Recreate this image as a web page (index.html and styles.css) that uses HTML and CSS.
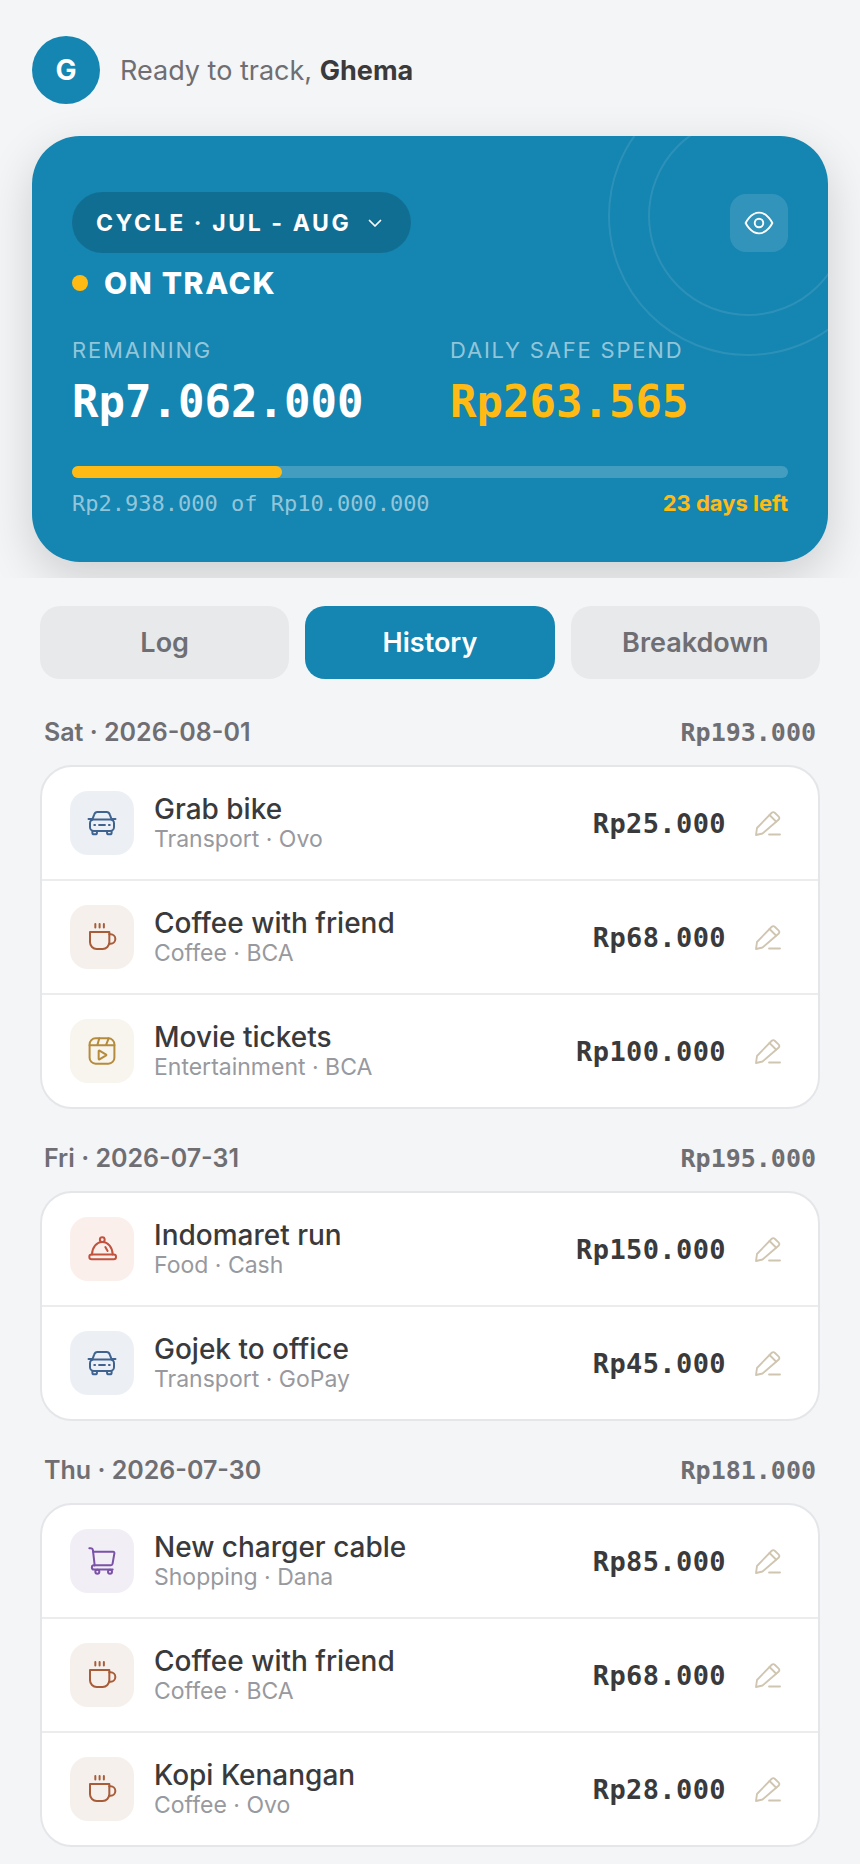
FILE: index.html
```html
<!DOCTYPE html>
<html lang="en">
<head>
    <meta charset="UTF-8">
    <meta name="viewport" content="width=device-width, initial-scale=1.0">
    <title>Budget Tracker</title>
    <link rel="stylesheet" href="styles.css">
</head>
<body>

<svg class="defs" aria-hidden="true">
    <symbol id="i-car" viewBox="0 0 24 24"><path d="M4.8 9.3 6.2 5.5A2.5 2.5 0 0 1 8.6 3.8h6.8a2.5 2.5 0 0 1 2.4 1.7l1.4 3.8"/><path d="M4.6 9H1.9M19.4 9h2.7"/><rect x="3" y="9.3" width="18" height="8.7" rx="2.8"/><path d="M4.8 18v1.3a1.2 1.2 0 0 0 1.2 1.2h1a1.2 1.2 0 0 0 1.2-1.2V18M15.8 18v1.3a1.2 1.2 0 0 0 1.2 1.2h1a1.2 1.2 0 0 0 1.2-1.2V18"/><path d="M6.2 13.5h.6M9.8 13.5h4.4M17.2 13.5h.6"/></symbol>
    <symbol id="i-cup" viewBox="0 0 24 24"><path d="M3 8.3h14.5V16a5 5 0 0 1-5 5H8a5 5 0 0 1-5-5z"/><path d="M17.5 10h1a3.5 3.5 0 0 1 0 7h-1.3"/><path d="M7 2.2v2.6M10.2 2.2v2.6M13.4 2.2v2.6"/></symbol>
    <symbol id="i-film" viewBox="0 0 24 24"><rect x="2.7" y="2.5" width="18.6" height="19" rx="4.5"/><path d="M2.7 7.6h18.6M10 2.5 8.5 7.6M17 2.5l-2 5.1"/><path d="M9.5 12v6a.4.4 0 0 0 .6.3l5-3a.4.4 0 0 0 0-.6l-5-3a.4.4 0 0 0-.6.3z"/></symbol>
    <symbol id="i-cart" viewBox="0 0 24 24"><path d="M2.5 2.5h1.2a1.5 1.5 0 0 1 1.5 1.3l1.3 11.5"/><path d="M5.3 5h15a1 1 0 0 1 1 1.2l-1.400 8a1.200 1.200 0 0 1-1.200 1H6a1.600 1.600 0 0 0 0 3.200h14"/><circle cx="8.5" cy="20" r="1.5"/><circle cx="18" cy="20" r="1.5"/></symbol>
    <symbol id="i-food" viewBox="0 0 24 24"><path d="M4.5 16.2A7.75 9.5 0 0 1 20 16.2"/><circle cx="12.2" cy="5" r="1.8"/><rect x="2.5" y="16.2" width="20" height="3.5" rx="1.7"/><path d="M14.5 10.5l1.700 3"/></symbol>
    <symbol id="i-edit" viewBox="0 0 28 28"><path d="M2 26l1-7L17.5 4a2.5 2.5 0 0 1 3.5 0l3.5 3.3a2.5 2.5 0 0 1 0 3.5L8.5 24.5z"/><path d="M15.5 6l6.5 6.5M15 25.500h11"/></symbol>
</svg>

<header class="hero">
    <div class="greeting">
        <div class="avatar">G</div>
        <p>Ready to track, <strong>Ghema</strong></p>
    </div>

    <section class="summary">
        <div class="rings">
            <span class="ring ring-big"></span>
            <span class="ring ring-small"></span>
        </div>

        <div class="summary-top">
            <button class="cycle">CYCLE · JUL - AUG
                <svg viewBox="0 0 24 24" width="24" height="24"><path d="M6.500 9.500l5.500 5.500 5.500-5.500"/></svg>
            </button>
            <button class="eye">
                <svg viewBox="0 0 24 24" width="32" height="32"><path d="M2 12s3.500-7.800 10-7.800S22 12 22 12s-3.500 7.800-10 7.800S2 12 2 12z"/><circle cx="12" cy="12" r="3.200"/></svg>
            </button>
        </div>

        <div class="status"><span class="dot"></span>ON TRACK</div>

        <div class="figures">
            <div>
                <div class="fig-label">REMAINING</div>
                <div class="fig-value">Rp7.062.000</div>
            </div>
            <div>
                <div class="fig-label">DAILY SAFE SPEND</div>
                <div class="fig-value safe">Rp263.565</div>
            </div>
        </div>

        <div class="bar"><div class="bar-fill" style="width: 29.38%"></div></div>
        <div class="bar-foot">
            <span class="spent">Rp2.938.000 of Rp10.000.000</span>
            <span class="days">23 days left</span>
        </div>
    </section>
</header>

<nav class="tabs">
    <button class="tab">Log</button>
    <button class="tab active">History</button>
    <button class="tab">Breakdown</button>
</nav>

<main>
    <div class="day-head"><span class="day">Sat · 2026-08-01</span><span class="day-total">Rp193.000</span></div>
    <ul class="list">
        <li class="row">
            <div class="icon transport"><svg><use href="#i-car"/></svg></div>
            <div class="info"><div class="name">Grab bike</div><div class="meta">Transport · Ovo</div></div>
            <div class="amount">Rp25.000</div>
            <svg class="edit"><use href="#i-edit"/></svg>
        </li>
        <li class="row">
            <div class="icon coffee"><svg><use href="#i-cup"/></svg></div>
            <div class="info"><div class="name">Coffee with friend</div><div class="meta">Coffee · BCA</div></div>
            <div class="amount">Rp68.000</div>
            <svg class="edit"><use href="#i-edit"/></svg>
        </li>
        <li class="row">
            <div class="icon fun"><svg><use href="#i-film"/></svg></div>
            <div class="info"><div class="name">Movie tickets</div><div class="meta">Entertainment · BCA</div></div>
            <div class="amount">Rp100.000</div>
            <svg class="edit"><use href="#i-edit"/></svg>
        </li>
    </ul>

    <div class="day-head"><span class="day">Fri · 2026-07-31</span><span class="day-total">Rp195.000</span></div>
    <ul class="list">
        <li class="row">
            <div class="icon food"><svg><use href="#i-food"/></svg></div>
            <div class="info"><div class="name">Indomaret run</div><div class="meta">Food · Cash</div></div>
            <div class="amount">Rp150.000</div>
            <svg class="edit"><use href="#i-edit"/></svg>
        </li>
        <li class="row">
            <div class="icon transport"><svg><use href="#i-car"/></svg></div>
            <div class="info"><div class="name">Gojek to office</div><div class="meta">Transport · GoPay</div></div>
            <div class="amount">Rp45.000</div>
            <svg class="edit"><use href="#i-edit"/></svg>
        </li>
    </ul>

    <div class="day-head"><span class="day">Thu · 2026-07-30</span><span class="day-total">Rp181.000</span></div>
    <ul class="list">
        <li class="row">
            <div class="icon shop"><svg><use href="#i-cart"/></svg></div>
            <div class="info"><div class="name">New charger cable</div><div class="meta">Shopping · Dana</div></div>
            <div class="amount">Rp85.000</div>
            <svg class="edit"><use href="#i-edit"/></svg>
        </li>
        <li class="row">
            <div class="icon coffee"><svg><use href="#i-cup"/></svg></div>
            <div class="info"><div class="name">Coffee with friend</div><div class="meta">Coffee · BCA</div></div>
            <div class="amount">Rp68.000</div>
            <svg class="edit"><use href="#i-edit"/></svg>
        </li>
        <li class="row">
            <div class="icon coffee"><svg><use href="#i-cup"/></svg></div>
            <div class="info"><div class="name">Kopi Kenangan</div><div class="meta">Coffee · Ovo</div></div>
            <div class="amount">Rp28.000</div>
            <svg class="edit"><use href="#i-edit"/></svg>
        </li>
    </ul>
</main>

</body>
</html>
```

FILE: styles.css
```css
body {
    margin: 0;
    font-family: Inter, "Liberation Sans", sans-serif;
    background-color: #f4f5f7;
    color: #3a3a3c;
}

button {
    font-family: inherit;
    border: none;
    padding: 0;
}

.defs {
    position: absolute;
    width: 0;
    height: 0;
}

/* Header */
.hero {
    padding: 36px 32px 16px;
    overflow: hidden;
}

.greeting {
    display: flex;
    align-items: center;
    gap: 20px;
    margin-bottom: 32px;
}

.greeting p {
    margin: 0;
    font-size: 27px;
    color: #6e6e73;
}

.greeting strong {
    font-weight: 700;
    color: #3a3a3c;
}

.avatar {
    width: 68px;
    height: 68px;
    border-radius: 50%;
    background-color: #1585b1;
    color: #fff;
    font-size: 28px;
    font-weight: 700;
    display: flex;
    align-items: center;
    justify-content: center;
}

/* Summary card */
.summary {
    position: relative;
    height: 426px;
    box-sizing: border-box;
    padding: 56px 40px 0;
    border-radius: 48px;
    background-color: #1585b1;
    box-shadow: 0 16px 48px rgba(0, 0, 0, 0.16);
    color: #fff;
}

.rings {
    position: absolute;
    inset: 0;
    overflow: hidden;
    border-radius: 48px;
}

.ring {
    position: absolute;
    border: 2px solid rgba(255, 255, 255, 0.1);
    border-radius: 50%;
    box-sizing: border-box;
}

.ring-big {
    width: 280px;
    height: 280px;
    top: -60px;
    right: -60px;
}

.ring-small {
    width: 200px;
    height: 200px;
    top: -20px;
    right: -20px;
}

.summary-top {
    position: relative;
    display: flex;
    justify-content: space-between;
    align-items: center;
}

.cycle {
    height: 61px;
    padding: 0 24px;
    border-radius: 31px;
    background-color: rgba(0, 0, 0, 0.17);
    color: #fff;
    font-size: 23px;
    font-weight: 700;
    letter-spacing: 2.6px;
    display: flex;
    align-items: center;
    gap: 12px;
}

.cycle svg {
    fill: none;
    stroke: #fff;
    stroke-width: 1.7;
    stroke-linecap: round;
    stroke-linejoin: round;
}

.eye {
    width: 58px;
    height: 58px;
    border-radius: 16px;
    background-color: rgba(255, 255, 255, 0.13);
    display: flex;
    align-items: center;
    justify-content: center;
}

.eye svg {
    fill: none;
    stroke: #fff;
    stroke-width: 1.4;
}

.status {
    position: relative;
    display: flex;
    align-items: center;
    gap: 16px;
    margin-top: 12px;
    font-size: 30px;
    line-height: 36px;
    font-weight: 800;
    letter-spacing: 1.65px;
}

.dot {
    width: 16px;
    height: 16px;
    border-radius: 50%;
    background-color: #ffba13;
}

.figures {
    position: relative;
    display: grid;
    grid-template-columns: 378px 1fr;
    margin-top: 36px;
}

.fig-label {
    font-size: 22px;
    line-height: 26px;
    letter-spacing: 1.8px;
    color: rgba(255, 255, 255, 0.55);
}

.fig-value {
    margin-top: 12px;
    font-family: "DejaVu Sans Mono", monospace;
    font-size: 44px;
    line-height: 54px;
    font-weight: 700;
}

.safe {
    color: #ffba13;
}

.bar {
    position: relative;
    height: 12px;
    margin-top: 37px;
    border-radius: 6px;
    background-color: rgba(255, 255, 255, 0.2);
}

.bar-fill {
    height: 100%;
    border-radius: 6px;
    background-color: #ffba13;
}

.bar-foot {
    position: relative;
    display: flex;
    justify-content: space-between;
    align-items: center;
    margin-top: 12px;
}

.spent {
    font-family: "DejaVu Sans Mono", monospace;
    font-size: 22px;
    color: rgba(255, 255, 255, 0.55);
}

.days {
    font-size: 22px;
    font-weight: 700;
    color: #ffba13;
}

/* Tabs */
.tabs {
    display: flex;
    gap: 16px;
    padding: 28px 40px 0;
}

.tab {
    flex: 1;
    height: 73px;
    border-radius: 20px;
    background-color: #e8e9eb;
    color: #6e6e73;
    font-size: 27px;
    font-weight: 600;
}

.tab.active {
    background-color: #1585b1;
    color: #fff;
}

/* History list */
main {
    padding: 4px 40px 16px;
}

.day-head {
    display: flex;
    justify-content: space-between;
    align-items: center;
    padding: 0 4px;
    height: 34px;
    margin: 32px 0 16px;
}

.day {
    font-size: 25px;
    font-weight: 600;
    color: #6e6e73;
}

.day-total {
    font-family: "DejaVu Sans Mono", monospace;
    font-size: 25px;
    font-weight: 700;
    color: #6e6e73;
}

.list {
    list-style: none;
    margin: 0;
    padding: 0;
    background-color: #fff;
    border: 2px solid #e5e6e9;
    border-radius: 32px;
    overflow: hidden;
}

.row {
    display: flex;
    align-items: center;
    height: 112px;
    padding: 0 28px;
    border-top: 2px solid #ebecee;
}

.row:first-child {
    border-top: none;
}

.icon {
    width: 64px;
    height: 64px;
    flex-shrink: 0;
    border-radius: 18px;
    display: flex;
    align-items: center;
    justify-content: center;
}

.icon svg {
    width: 32px;
    height: 32px;
    fill: none;
    stroke: currentColor;
    stroke-width: 1.5;
    stroke-linecap: round;
    stroke-linejoin: round;
}

.transport {
    background-color: #ecf0f5;
    color: #3f6390;
}

.coffee {
    background-color: #f5f0ec;
    color: #a85c38;
}

.fun {
    background-color: #f8f4ee;
    color: #b58b3c;
}

.food {
    background-color: #fbefec;
    color: #c0523e;
}

.shop {
    background-color: #f1eef6;
    color: #7b52a8;
}

.info {
    flex: 1;
    margin-left: 20px;
    min-width: 0;
}

.name {
    font-size: 28px;
    line-height: 32px;
    font-weight: 500;
    color: #3a3a3c;
}

.meta {
    font-size: 23px;
    line-height: 29px;
    color: #98999e;
}

.amount {
    font-family: "DejaVu Sans Mono", monospace;
    font-size: 27px;
    letter-spacing: 0.4px;
    font-weight: 700;
    color: #3a3a3c;
}

.edit {
    width: 28px;
    height: 28px;
    margin-left: 28px;
    margin-right: 8px;
    fill: none;
    stroke: #cfc5b0;
    stroke-width: 1.8;
    stroke-linecap: round;
    stroke-linejoin: round;
}
```
